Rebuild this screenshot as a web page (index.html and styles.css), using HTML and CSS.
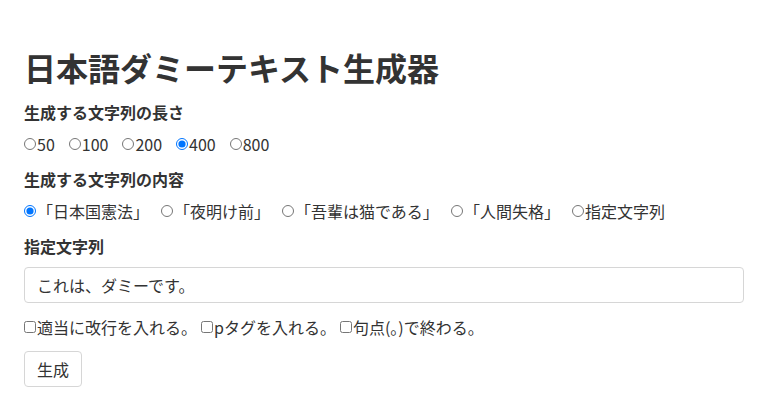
FILE: index.html
```html
<!DOCTYPE html>
<html lang="ja">
<head>
    <meta charset="UTF-8">
    <title>日本語ダミーテキスト生成器</title>
    <link rel="stylesheet" href="styles.css">
</head>
<body>
<div class="container">
    <h1 class="title">日本語ダミーテキスト生成器</h1>

    <div class="field">
        <div class="field_label">生成する文字列の長さ</div>
        <div class="options nums">
            <label class="opt"><input type="radio" name="len" value="50">50</label>
            <label class="opt"><input type="radio" name="len" value="100">100</label>
            <label class="opt"><input type="radio" name="len" value="200">200</label>
            <label class="opt"><input type="radio" name="len" value="400" checked>400</label>
            <label class="opt"><input type="radio" name="len" value="800">800</label>
        </div>
    </div>

    <div class="field">
        <div class="field_label">生成する文字列の内容</div>
        <div class="options">
            <label class="opt"><input type="radio" name="src" value="kenpo" checked>「日本国憲法」</label>
            <label class="opt"><input type="radio" name="src" value="yoake">「夜明け前」</label>
            <label class="opt"><input type="radio" name="src" value="neko">「吾輩は猫である」</label>
            <label class="opt"><input type="radio" name="src" value="ningen">「人間失格」</label>
            <label class="opt"><input type="radio" name="src" value="custom">指定文字列</label>
        </div>
    </div>

    <div class="field">
        <div class="field_label">指定文字列</div>
        <input class="text_input" type="text" value="これは、ダミーです。">
    </div>

    <div class="field">
        <div class="options checks">
            <label class="chk"><input type="checkbox">適当に改行を入れる。</label>
            <label class="chk"><input type="checkbox">pタグを入れる。</label>
            <label class="chk"><input type="checkbox">句点(。)で終わる。</label>
        </div>
    </div>

    <button class="btn" type="button">生成</button>
</div>
</body>
</html>
```

FILE: styles.css
```css
* {
    margin: 0;
    padding: 0;
    box-sizing: border-box;
}

body {
    font-family: "Noto Sans CJK JP", "Noto Sans", sans-serif;
    font-size: 16px;
    color: #333;
    background: #fff;
}

.container {
    width: 768px;
    padding: 48px 24px 0;
}

.title {
    font-size: 32px;
    line-height: 38px;
    font-weight: bold;
    margin-bottom: 15px;
}

.field {
    margin-bottom: 13px;
}

.field_label {
    font-weight: bold;
    font-size: 16px;
    line-height: 22px;
    margin-bottom: 10px;
}

.options {
    display: flex;
    line-height: 22px;
}

.opt {
    display: flex;
    align-items: center;
    margin-right: 12px;
}

.nums .opt {
    margin-right: 14px;
}

.chk {
    display: flex;
    align-items: center;
    margin-right: 4px;
}

.options input {
    width: 12px;
    height: 12px;
    margin: 0 1px 0 0;
}

.text_input {
    display: block;
    width: 100%;
    height: 36px;
    padding: 0 12px;
    border: 1px solid #d6d6d6;
    border-radius: 4px;
    font-family: inherit;
    font-size: 16px;
    color: #333;
    outline: none;
}

.btn {
    display: block;
    width: 58px;
    height: 36px;
    border: 1px solid #d6d6d6;
    border-radius: 4px;
    background: #fff;
    font-family: inherit;
    font-size: 16px;
    color: #333;
}
```
